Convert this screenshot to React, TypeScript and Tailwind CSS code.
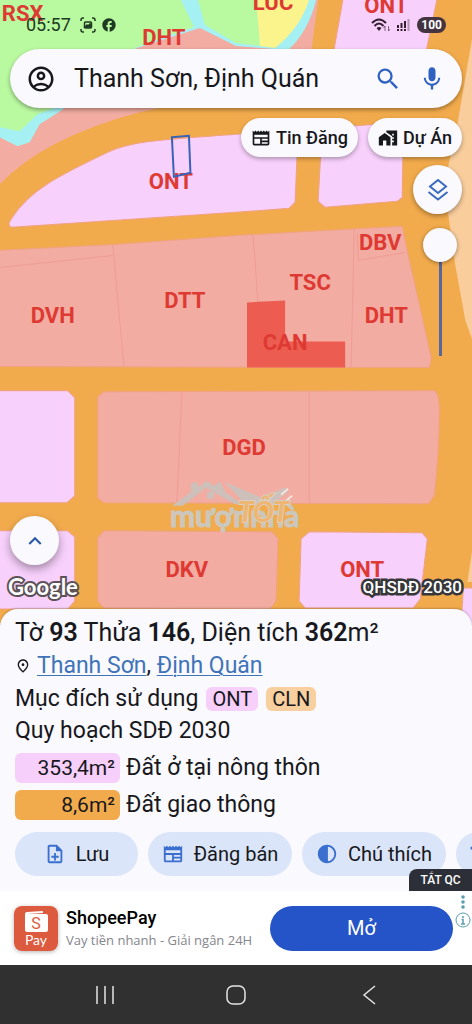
import { useState } from "react";
import {
  MdContrast,
  MdFacebook,
  MdHomeWork,
  MdKeyboardArrowUp,
  MdMic,
  MdNewspaper,
  MdOutlineAccountCircle,
  MdOutlineNoteAdd,
  MdOutlinePlace,
  MdSearch,
  MdTitle,
} from "react-icons/md";

const parcels = [
  { d: "M12 227C9 226 8 223 12 218C30 189 62 174 110 151C135 140 170 139 236 134L298 130L295 202L289 208L236 212Z", fill: "#f7d0fb" },
  { d: "M322 128L403 122L402 197L397 201L325 207L318 201Z", fill: "#f7d0fb" },
  { d: "M343 -2L437 -2L424 60L332 60Z", fill: "#f7d0fb" },
  { d: "M-2 250L115 244L236 235L402 226L408 255L431 357L429 367L-2 366Z", fill: "#f2aca1" },
  { d: "M-2 390H68L75 397V495L67 502H-2Z", fill: "#f7d0fb" },
  { d: "M104 391L434 390Q439 393 439 410Q439 450 434 495L428 503L104 502L98 497V396Z", fill: "#f2aca1" },
  { d: "M-2 530H68L75 536V600L68 608H-2Z", fill: "#f7d0fb" },
  { d: "M104 530L272 531L278 538L276 600L270 608L104 607L98 600V537Z", fill: "#f2aca1" },
  { d: "M309 531L422 532L427 538L420 598L413 607H305L299 600L301 538Z", fill: "#f7d0fb" },
  { d: "M463 587H474V650H459Z", fill: "#f7d0fb" },
];

const mapLabels = [
  { x: 23, y: 21, text: "RSX" },
  { x: 164, y: 45, text: "DHT" },
  { x: 273, y: 10, text: "LUC" },
  { x: 386, y: 13, text: "ONT" },
  { x: 171, y: 189, text: "ONT" },
  { x: 53, y: 322, text: "DVH" },
  { x: 185, y: 308, text: "DTT" },
  { x: 310, y: 290, text: "TSC" },
  { x: 380, y: 250, text: "DBV" },
  { x: 386, y: 322, text: "DHT" },
  { x: 285, y: 349, text: "CAN" },
  { x: 244, y: 454, text: "DGD" },
  { x: 187, y: 576, text: "DKV" },
  { x: 362, y: 576, text: "ONT" },
];

const LandMap = () => (
  <svg viewBox="0 0 472 624" preserveAspectRatio="xMidYMin slice" className="absolute inset-0 h-full w-full">
    <rect width="472" height="700" fill="#f2ab4c" />
    {/* fields and stream in the top left corner */}
    <path d="M0 0H318L310 60Q240 92 140 112Q45 137 0 184Z" fill="#f2aca1" />
    <path d="M0 0H316Q308 32 288 50L236 46L200 28L137 48L62 110L40 124L30 142L18 146L0 137Z" fill="#a5f0f3" />
    <path d="M157 49L195 38L236 49V60H157Z" fill="#f2aca1" />
    <path d="M0 0H181L194 27L137 47L75 100L38 114L20 131L0 127Z" fill="#b9f9a0" />
    <path d="M198 0H256L260 46L236 43L205 25Z" fill="#b9f9a0" />
    <path d="M256 0H309Q300 28 275 48L260 46Z" fill="#fbf38c" />
    <path d="M474 25L456 130L447 170L448 215L455 265L465 320L474 345Z" fill="#f9cd9c" />
    <path d="M474 535L467 581H474Z" fill="#f9cd9c" />
    {parcels.map((p) => (
      <path key={p.d} d={p.d} fill={p.fill} stroke="#f0a283" strokeLinejoin="round" />
    ))}
    <path
      d="M0 267L113 255M113 244L124 366M253 235L258 302M354 228L351 366M357 232L358 260L405 252M182 391L177 502M309 391V502"
      fill="none"
      stroke="#ef9c96"
      strokeWidth="1"
    />
    <path d="M247 302L285 300V341H345V367H247Z" fill="#ed5c50" />
    <g fill="#de3a33" fontSize="22" fontWeight="700" textAnchor="middle">
      {mapLabels.map((l) => (
        <text key={`${l.x}-${l.y}`} x={l.x} y={l.y}>
          {l.text}
        </text>
      ))}
    </g>
    <path d="M172 137L189 135.500L190.500 172.500L174 176.500Z" fill="none" stroke="#3a62b8" strokeWidth="2" />
    {/* watermark */}
    <g className="font-['Lato',sans-serif]" fontWeight="700">
      <g fill="#c9c3be" opacity="0.9">
        <path d="M172 505L207 480L214 485L220 481L226 492L240 502L236 504L206 487L183 505Z" />
        <path d="M191 482h7v5l-7 5ZM207 491h7v7h-7Z" />
        <path d="M224 481L262 497L284 487L289 490L272 504H246Z" />
      </g>
      <path d="M281 494L288 488M286 500L292 495" stroke="#f4e3dc" strokeWidth="2" />
      <text x="170" y="526" fontSize="30" fill="#cbc7bd" stroke="#cbc7bd" strokeWidth="1">
        mượnnhà
      </text>
      <text x="238" y="521" fontSize="28" fontStyle="italic" fill="#efb572" stroke="#d6cfc2" strokeWidth="2" className="[paint-order:stroke_fill]">
        TỐT
      </text>
    </g>
  </svg>
);

const StatusBar = () => (
  <div className="flex h-[49px] items-center justify-between px-[26px] text-[#203a22]">
    <div className="flex items-center gap-[9px]">
      <span className="text-[18px]">05:57</span>
      <svg viewBox="0 0 16 16" className="h-4 w-4" fill="none" stroke="currentColor" strokeWidth="1.500">
        <path d="M1 4V3Q1 1 3 1H4M12 1H13Q15 1 15 3V4M15 12V13Q15 15 13 15H12M4 15H3Q1 15 1 13V12" />
        <rect x="4.500" y="5" width="7" height="6" rx="1" />
        <path d="M5 10L7 8L8 9L10 7L11 10Z" fill="currentColor" />
      </svg>
      <MdFacebook className="-ml-1 h-4 w-4" />
    </div>
    <div className="flex items-center gap-[6px] text-[#33202f]">
      <svg viewBox="0 0 20 16" className="h-4 w-5" fill="none" stroke="currentColor" strokeWidth="2">
        <path d="M1 6Q8 -1 15 6M3.500 9Q8 4 12.500 9" />
        <path d="M5.500 11Q8 9 10.500 11L8 14Z" fill="currentColor" stroke="none" />
        <path d="M14 14V9L12.500 11M17.500 9V14L19 12" strokeWidth="1" opacity="0.6" />
      </svg>
      <svg viewBox="0 0 14 14" className="h-[14px] w-[14px]" fill="currentColor">
        <path d="M0 7h2v3H0zM3.500 5h2v5h-2zM7 3h2v7H7zM0 11h2v2H0zM3.500 11h2v2h-2zM7 11h2v2H7z" />
        <path d="M10.500 1h2v12h-2z" opacity="0.35" />
      </svg>
      <span className="rounded-full bg-[#443440] px-1 text-[12px] leading-4 font-bold text-white">100</span>
    </div>
  </div>
);

const App: React.FC = () => {
  const [query, setQuery] = useState("Thanh Sơn, Định Quán");
  const [opacity, setOpacity] = useState(0);

  return (
    <div className="flex min-h-screen flex-col overflow-x-hidden bg-[#faf9fe] font-['Roboto',sans-serif] text-[#17181c]">
      <main className="relative flex flex-1 flex-col overflow-hidden pb-6">
        <LandMap />
        <div className="relative flex flex-1 flex-col">
          <StatusBar />

          <div className="mx-[10px] flex h-[59px] items-center rounded-full bg-[#faf9fe] px-4 shadow-[0_2px_4px_rgba(0,0,0,0.35)]">
            <button aria-label="Tài khoản">
              <MdOutlineAccountCircle className="h-[30px] w-[30px]" />
            </button>
            <input
              aria-label="Tìm kiếm"
              value={query}
              onChange={(e) => setQuery(e.target.value)}
              className="ml-[18px] min-w-0 flex-1 bg-transparent text-[25px] outline-none"
            />
            <button aria-label="Tìm" className="text-[#2f62c0]">
              <MdSearch className="h-7 w-7" />
            </button>
            <button aria-label="Nói" className="ml-4 text-[#2f62c0]">
              <MdMic className="h-7 w-7" />
            </button>
          </div>

          <div className="mt-[10px] flex justify-end gap-[10px] px-[10px] text-[18px] font-medium">
            <button className="flex h-[39px] items-center gap-[5px] rounded-full bg-[#faf9fe] px-[10px] shadow-[0_2px_4px_rgba(0,0,0,0.3)]">
              <MdNewspaper className="h-5 w-5" />
              Tin Đăng
            </button>
            <button className="flex h-[39px] items-center gap-[5px] rounded-full bg-[#faf9fe] px-[10px] shadow-[0_2px_4px_rgba(0,0,0,0.3)]">
              <MdHomeWork className="h-5 w-5" />
              Dự Án
            </button>
          </div>

          <div className="mt-2 flex flex-col items-end pr-[10px]">
            <button
              aria-label="Lớp bản đồ"
              className="flex h-[49px] w-[49px] items-center justify-center rounded-full bg-[#faf9fe] text-[#3a6bc0] shadow-[0_2px_5px_rgba(0,0,0,0.35)]"
            >
              <svg viewBox="0 0 22 24" className="h-6 w-[22px]" fill="none" stroke="currentColor" strokeWidth="2">
                <path d="M11 2L19 8.500L11 15L3 8.500ZM1.500 14L11 21.500L20.500 14" />
              </svg>
            </button>
            <input
              type="range"
              aria-label="Độ mờ"
              value={opacity}
              onChange={(e) => setOpacity(Number(e.target.value))}
              className="mt-[14px] mr-[5px] h-[128px] w-[34px] appearance-none bg-transparent [writing-mode:vertical-lr] [&::-webkit-slider-runnable-track]:w-[3px] [&::-webkit-slider-runnable-track]:bg-[#56679f] [&::-webkit-slider-thumb]:-ml-4 [&::-webkit-slider-thumb]:h-[34px] [&::-webkit-slider-thumb]:w-[34px] [&::-webkit-slider-thumb]:appearance-none [&::-webkit-slider-thumb]:rounded-full [&::-webkit-slider-thumb]:bg-[#faf9fe] [&::-webkit-slider-thumb]:shadow-[0_1px_4px_rgba(0,0,0,0.4)]"
            />
          </div>

          <div className="mt-auto px-[10px]">
            <button
              aria-label="Mở rộng"
              className="flex h-[49px] w-[49px] items-center justify-center rounded-full bg-[#faf9fe] text-[#2c5aa8] shadow-[0_4px_8px_rgba(0,0,0,0.35)]"
            >
              <MdKeyboardArrowUp className="h-[26px] w-[26px]" />
            </button>
          </div>
          <div className="mt-2 flex items-center justify-between px-2">
            <span className="font-['Lato',sans-serif] text-[22px] leading-7 font-bold text-white [-webkit-text-stroke:4px_#5b5157] [paint-order:stroke_fill]">
              Google
            </span>
            <span className="pr-[2px] text-[17px] leading-7 font-medium text-white [-webkit-text-stroke:5px_#37373a] [paint-order:stroke_fill]">
              QHSDĐ 2030
            </span>
          </div>
        </div>
      </main>

      <section className="relative -mt-4 rounded-t-[18px] bg-[#faf9fe] px-[15px] pt-2 pb-[15px] shadow-[0_-1px_2px_rgba(0,0,0,0.2)]">
        <h1 className="text-[25px] leading-8">
          Tờ <b className="font-semibold">93</b> Thửa <b className="font-semibold">146</b>, Diện tích{" "}
          <b className="font-semibold">362</b>m²
        </h1>
        <p className="flex items-center text-[23px] leading-[34px]">
          <MdOutlinePlace className="mr-[6px] h-4 w-4" />
          <span>
            <a href="#thanh-son" className="text-[#3f74b8] underline decoration-1 underline-offset-2">Thanh Sơn</a>,{" "}
            <a href="#dinh-quan" className="text-[#3f74b8] underline decoration-1 underline-offset-2">Định Quán</a>
          </span>
        </p>
        <p className="flex h-8 items-center text-[23px]">
          Mục đích sử dụng
          <span className="ml-2 rounded-md bg-[#f7cffb] px-[6px] text-[20px] leading-6">ONT</span>
          <span className="ml-2 rounded-md bg-[#f8cf9f] px-[6px] text-[20px] leading-6">CLN</span>
        </p>
        <p className="text-[23px] leading-8">Quy hoạch SDĐ 2030</p>
        <ul className="mt-[6px] flex flex-col gap-[7px] text-[23px]">
          <li className="flex h-[30px] items-center gap-[6px] leading-8">
            <span className="w-[105px] rounded-md bg-[#f7cffb] pr-[5px] text-right text-[21px] leading-[30px]">353,4m²</span>
            Đất ở tại nông thôn
          </li>
          <li className="flex h-[30px] items-center gap-[6px] leading-8">
            <span className="w-[105px] rounded-md bg-[#f2ab4c] pr-[5px] text-right text-[21px] leading-[30px]">8,6m²</span>
            Đất giao thông
          </li>
        </ul>
        <div className="-mr-[15px] mt-3 flex gap-[10px] overflow-hidden text-[20px] whitespace-nowrap">
          <button className="flex h-11 w-[123px] shrink-0 items-center justify-center gap-[10px] rounded-full bg-[#dbe5f9]">
            <MdOutlineNoteAdd className="h-[22px] w-[22px] text-[#3a6fd0]" />
            Lưu
          </button>
          <button className="flex h-11 w-[144px] shrink-0 items-center justify-center gap-[10px] rounded-full bg-[#dbe5f9]">
            <MdNewspaper className="h-[22px] w-[22px] text-[#3a6fd0]" />
            Đăng bán
          </button>
          <button className="flex h-11 w-[144px] shrink-0 items-center justify-center gap-[10px] rounded-full bg-[#dbe5f9]">
            <MdContrast className="h-[22px] w-[22px] text-[#3a6fd0]" />
            Chú thích
          </button>
          <button aria-label="Thêm" className="flex h-11 w-[123px] shrink-0 items-center rounded-full bg-[#dbe5f9] pl-[10px]">
            <MdTitle className="h-[22px] w-[22px] text-[#3a6fd0]" />
          </button>
        </div>
        <button className="absolute right-0 bottom-0 h-[22px] w-[63px] rounded-tl-lg bg-[#2d2f38] text-[12px] font-medium text-white">
          TẮT QC
        </button>
      </section>

      <aside className="flex h-[74px] items-center bg-white pl-[14px]">
        <svg viewBox="0 0 44 45" className="h-[45px] w-11 shrink-0 rounded-lg shadow-[0_1px_4px_rgba(0,0,0,0.3)]">
          <rect width="44" height="45" fill="#dc5a3e" />
          <path d="M11 8Q11 6 13 6L29 5V7L13 8H32Q34 8 34 10V24Q34 26 32 26H13Q11 26 11 24Z" fill="#fff" />
          <text x="22" y="23" textAnchor="middle" fontSize="16" fill="#dc5a3e">S</text>
          <text x="22" y="39" textAnchor="middle" fontSize="14" fill="#fff" className="font-['Lato',sans-serif]">Pay</text>
        </svg>
        <div className="ml-2 flex-1 whitespace-nowrap">
          <h2 className="text-[18px] leading-6 font-medium text-black">ShopeePay</h2>
          <p className="font-['Open_Sans',sans-serif] text-[13px] leading-5 text-[#85858c]">Vay tiền nhanh - Giải ngân 24H</p>
        </div>
        <button className="h-[45px] w-[183px] rounded-full bg-[#2454c7] text-[20px] text-white">Mở</button>
        <div className="flex w-[19px] flex-col items-center gap-[3px] self-start pt-1 text-[#5a9eae]">
          <svg viewBox="0 0 4 14" className="h-[14px] w-1" fill="currentColor">
            <circle cx="2" cy="2" r="1.800" />
            <circle cx="2" cy="7" r="1.800" />
            <circle cx="2" cy="12" r="1.800" />
          </svg>
          <svg viewBox="0 0 16 16" className="h-4 w-4" fill="none" stroke="currentColor">
            <circle cx="8" cy="8" r="7" />
            <path d="M8 4V6M6.500 7.500H8V12M6 12H10" strokeWidth="1.500" />
          </svg>
        </div>
      </aside>

      <nav className="flex h-[59px] items-center justify-between bg-[#303030] px-[95px] text-[#e4e4e4]">
        <button aria-label="Gần đây">
          <svg viewBox="0 0 20 20" className="h-5 w-5" fill="none" stroke="currentColor" strokeWidth="1.500">
            <path d="M2 1V19M10 1V19M18 1V19" />
          </svg>
        </button>
        <button aria-label="Màn hình chính">
          <svg viewBox="0 0 20 20" className="h-5 w-5" fill="none" stroke="currentColor" strokeWidth="1.500">
            <rect x="1" y="1" width="18" height="18" rx="6" />
          </svg>
        </button>
        <button aria-label="Quay lại">
          <svg viewBox="0 0 20 20" className="h-5 w-5" fill="none" stroke="currentColor" strokeWidth="1.500">
            <path d="M18 1L7 10L18 19" />
          </svg>
        </button>
      </nav>
    </div>
  );
};

export default App;
